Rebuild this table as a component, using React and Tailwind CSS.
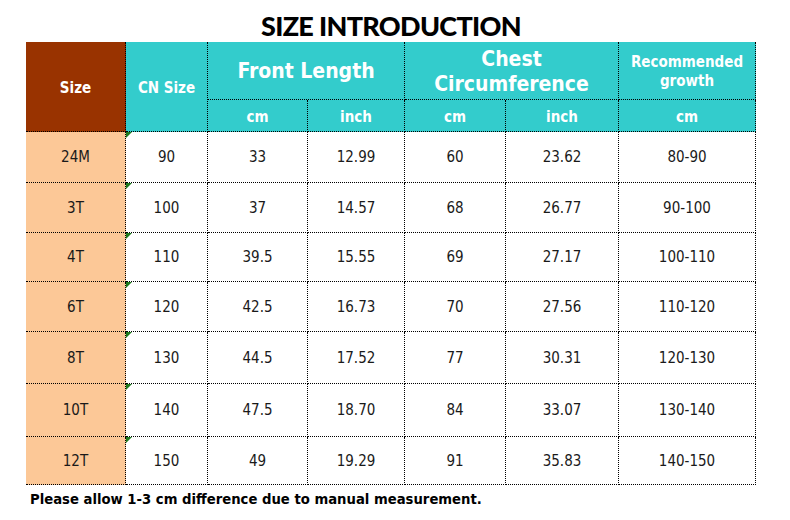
const rows = [
  { size: "24M", cn: "90", fcm: "33", fin: "12.99", ccm: "60", cin: "23.62", growth: "80-90", h: "h-[51px]" },
  { size: "3T", cn: "100", fcm: "37", fin: "14.57", ccm: "68", cin: "26.77", growth: "90-100", h: "h-[50px]" },
  { size: "4T", cn: "110", fcm: "39.5", fin: "15.55", ccm: "69", cin: "27.17", growth: "100-110", h: "h-[49px]" },
  { size: "6T", cn: "120", fcm: "42.5", fin: "16.73", ccm: "70", cin: "27.56", growth: "110-120", h: "h-[50px]" },
  { size: "8T", cn: "130", fcm: "44.5", fin: "17.52", ccm: "77", cin: "30.31", growth: "120-130", h: "h-[52px]" },
  { size: "10T", cn: "140", fcm: "47.5", fin: "18.70", ccm: "84", cin: "33.07", growth: "130-140", h: "h-[53px]" },
  { size: "12T", cn: "150", fcm: "49", fin: "19.29", ccm: "91", cin: "35.83", growth: "140-150", h: "h-[48px]" },
];

const cell = "flex items-center justify-center border-r border-b border-dotted border-black";

export default function App() {
  return (
    <div className="w-[790px] h-[520px] bg-white overflow-hidden font-['DejaVu_Sans_Condensed','DejaVu_Sans',sans-serif]">
      <h1 className="h-[42px] pt-[10px] pr-[8px] text-center text-[27px] leading-[32px] font-black tracking-tight text-black font-['Lato',sans-serif]">
        SIZE INTRODUCTION
      </h1>

      <div className="ml-[26px] grid grid-cols-[100px_82px_100px_97px_101px_113px_137px]">
        {/* HEADER */}
        <div className={`${cell} row-span-2 pt-[4px] bg-[#993300] text-white text-[15px] font-bold`}>Size</div>
        <div className={`${cell} row-span-2 pt-[4px] bg-[#33cccc] text-white text-[15px] font-bold`}>CN Size</div>
        <div className={`${cell} col-span-2 h-[58px] pt-[3px] bg-[#33cccc] text-white text-[21px] font-bold`}>Front Length</div>
        <div className={`${cell} col-span-2 h-[58px] pt-[3px] bg-[#33cccc] text-white text-[21px] font-bold leading-[25px] text-center`}>
          Chest<br />Circumference
        </div>
        <div className={`${cell} h-[58px] pt-[3px] bg-[#33cccc] text-white text-[15px] font-bold leading-[19px] text-center`}>
          Recommended<br />growth
        </div>
        {["cm", "inch", "cm", "inch", "cm"].map((u, i) => (
          <div key={i} className={`${cell} h-[32px] pt-[3px] bg-[#33cccc] text-white text-[15px] font-bold`}>{u}</div>
        ))}

        {/* ROWS */}
        {rows.map((r) => (
          <div key={r.size} className="contents text-[15px] text-[#1a1a1a]">
            <div className={`${cell} ${r.h} pt-[1px] bg-[#fcc897]`}>{r.size}</div>
            <div className={`${cell} ${r.h} pt-[1px] relative`}>
              <span className="absolute left-0 top-0 w-0 h-0 border-t-[6px] border-r-[6px] border-t-[#1f7a1f] border-r-transparent" />
              {r.cn}
            </div>
            <div className={`${cell} ${r.h} pt-[1px]`}>{r.fcm}</div>
            <div className={`${cell} ${r.h} pt-[1px]`}>{r.fin}</div>
            <div className={`${cell} ${r.h} pt-[1px]`}>{r.ccm}</div>
            <div className={`${cell} ${r.h} pt-[1px]`}>{r.cin}</div>
            <div className={`${cell} ${r.h} pt-[1px]`}>{r.growth}</div>
          </div>
        ))}
      </div>

      <p className="ml-[30px] mt-[3px] text-[14.7px] font-bold text-black">
        Please allow 1-3 cm difference due to manual measurement.
      </p>
    </div>
  );
}
